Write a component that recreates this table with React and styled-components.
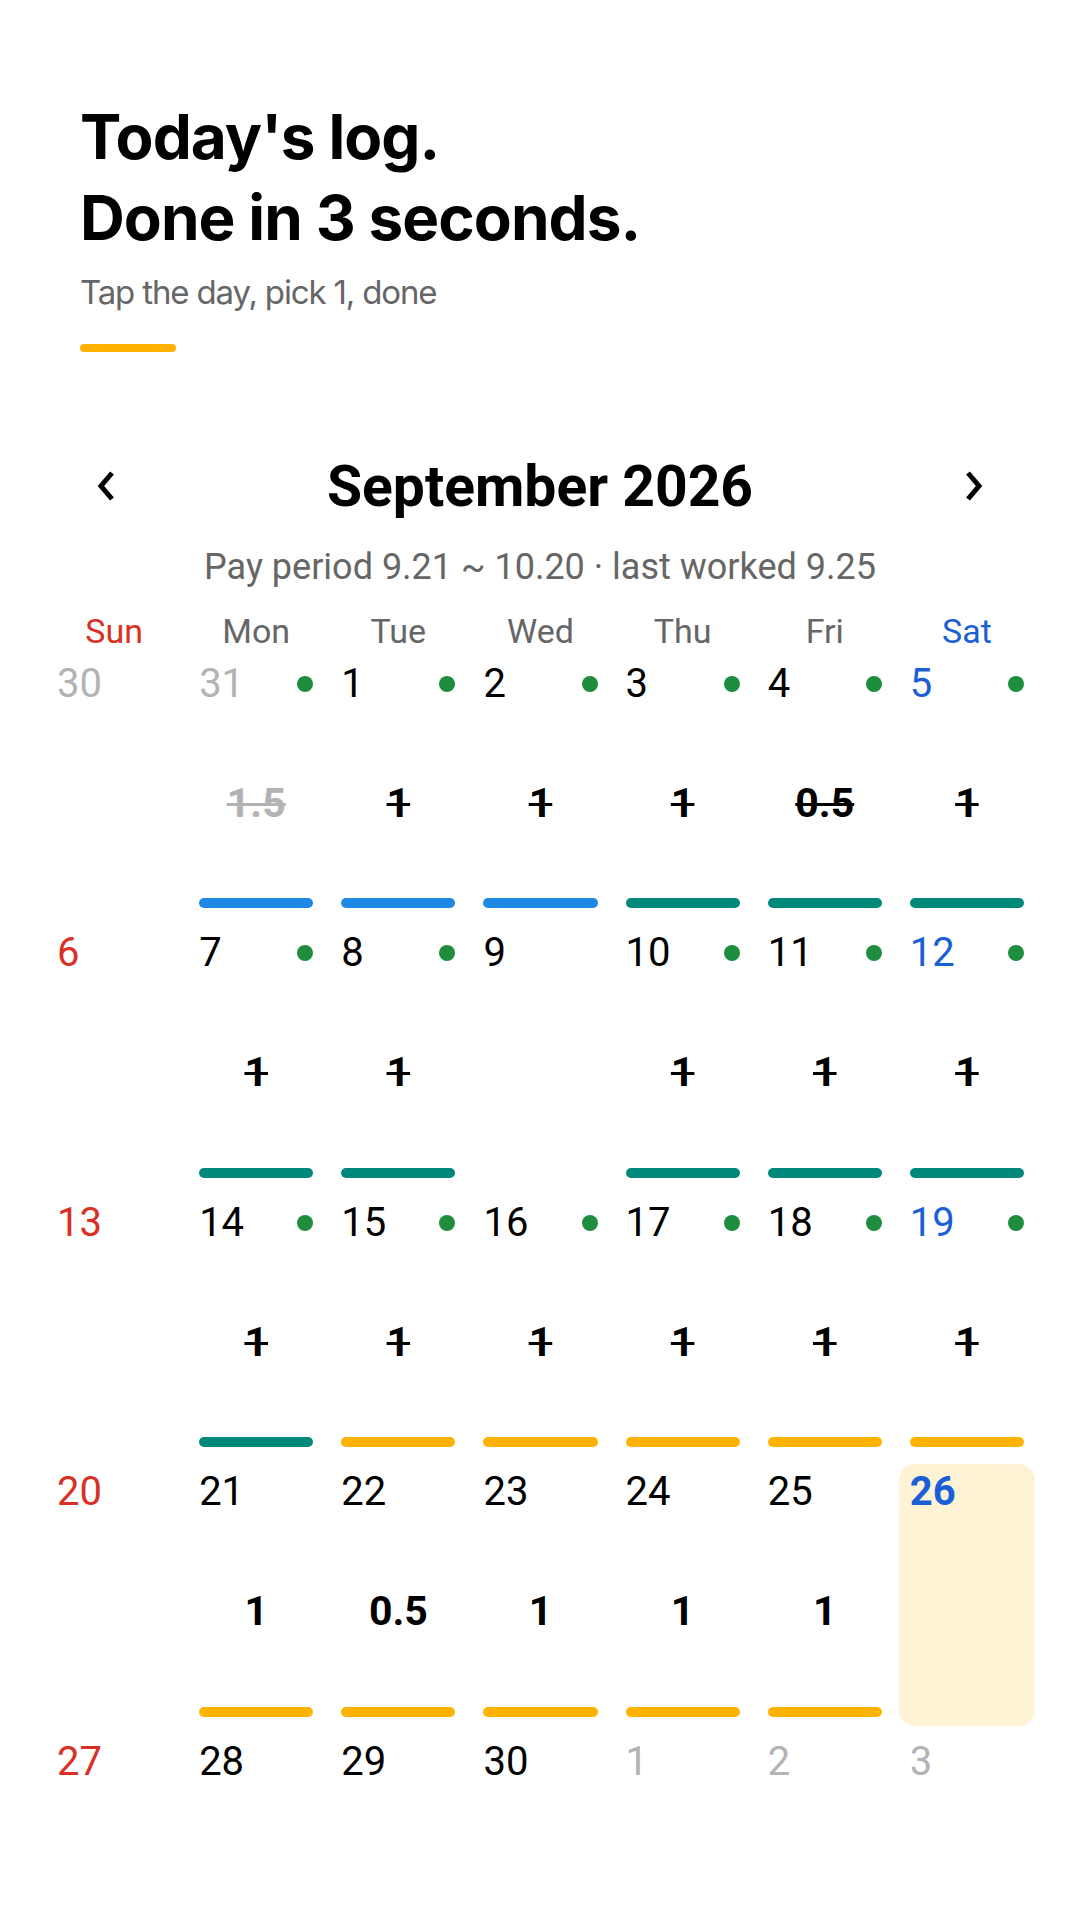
import React from 'react'
import styled, { createGlobalStyle } from 'styled-components'

const GlobalStyle = createGlobalStyle`
    body {
        margin: 0;
        background: #fff;
        font-family: Roboto, "Noto Sans", sans-serif;
        color: #000;
    }
`

const Page = styled.div`
    padding-top: 97px;
`
const Intro = styled.header`
    padding: 0 80px;
`
const Headline = styled.h1`
    margin: 0;
    font-family: Inter, "Noto Sans", sans-serif;
    font-weight: 700;
    font-size: 62px;
    line-height: 1.3;
    letter-spacing: -0.015em;
`
const Sub = styled.p`
    margin: 13px 0 0;
    font-family: Inter, "Noto Sans", sans-serif;
    font-size: 33px;
    line-height: 1.3;
    letter-spacing: -0.035em;
    color: #666;
`
const Accent = styled.div`
    margin-top: 30px;
    width: 96px;
    height: 8px;
    border-radius: 4px;
    background: #ffb300;
`
const Nav = styled.div`
    margin-top: 97px;
    padding: 0 97px;
    display: flex;
    align-items: flex-start;
    justify-content: space-between;
`
const Arrow = styled.button`
    border: 0;
    background: none;
    padding: 0;
    width: 18px;
    height: 30px;
    margin-top: 22px;
    display: flex;
`
const Month = styled.h2`
    margin: 4px 0 0;
    font-size: 57px;
    font-weight: 700;
    line-height: 67px;
`
const Period = styled.div`
    margin-top: 26px;
    text-align: center;
    font-size: 36px;
    line-height: 43px;
    color: #666;
`
const Grid = styled.div`
    padding: 0 45px 0 46px;
    display: grid;
    grid-template-columns: repeat(7, 1fr);
    column-gap: 6px;
    row-gap: 8px;
`
const Weekday = styled.div`
    margin-top: 24.5px;
    text-align: center;
    font-size: 34px;
    line-height: 34px;
    color: ${p => p.$tone === 'sun' ? '#d93025' : p.$tone === 'sat' ? '#1a5fd6' : '#666'};
`
const Cell = styled.div`
    height: 261.5px;
    box-sizing: border-box;
    padding: 8px 11px 9px;
    display: flex;
    flex-direction: column;
    border-radius: 16px;
    background: ${p => p.$today ? '#fff3d6' : 'transparent'};
`
const Top = styled.div`
    display: flex;
    align-items: center;
    justify-content: space-between;
    height: 40px;
`
const DateNum = styled.span`
    font-size: 40px;
    line-height: 40px;
    font-weight: ${p => p.$today ? 700 : 400};
    color: ${p => p.$tone === 'muted' ? '#b3b3b3' : p.$tone === 'sun' ? '#d93025' : p.$tone === 'sat' ? '#1a5fd6' : '#000'};
`
const Dot = styled.span`
    width: 16px;
    height: 16px;
    border-radius: 50%;
    background: #1e8e3e;
`
const Value = styled.div`
    flex: 1;
    padding-top: 5px;
    display: flex;
    align-items: center;
    justify-content: center;
    font-size: 41px;
    line-height: 41px;
    font-weight: 700;
    color: ${p => p.$muted ? '#b3b3b3' : '#000'};
    text-decoration: ${p => p.$done ? 'line-through' : 'none'};
    text-decoration-thickness: 3px;
`
const Bar = styled.div`
    height: 10px;
    border-radius: 5px;
    background: ${p => p.$color};
    visibility: ${p => p.$color ? 'visible' : 'hidden'};
`

const BLUE = '#1e88e5'
const TEAL = '#00897b'
const AMBER = '#ffb300'

const days = [
    { d: 30, tone: 'muted' },
    { d: 31, tone: 'muted', dot: true, v: '1.5', done: true, muted: true, bar: BLUE },
    { d: 1, dot: true, v: '1', done: true, bar: BLUE },
    { d: 2, dot: true, v: '1', done: true, bar: BLUE },
    { d: 3, dot: true, v: '1', done: true, bar: TEAL },
    { d: 4, dot: true, v: '0.5', done: true, bar: TEAL },
    { d: 5, tone: 'sat', dot: true, v: '1', done: true, bar: TEAL },

    { d: 6, tone: 'sun' },
    { d: 7, dot: true, v: '1', done: true, bar: TEAL },
    { d: 8, dot: true, v: '1', done: true, bar: TEAL },
    { d: 9 },
    { d: 10, dot: true, v: '1', done: true, bar: TEAL },
    { d: 11, dot: true, v: '1', done: true, bar: TEAL },
    { d: 12, tone: 'sat', dot: true, v: '1', done: true, bar: TEAL },

    { d: 13, tone: 'sun' },
    { d: 14, dot: true, v: '1', done: true, bar: TEAL },
    { d: 15, dot: true, v: '1', done: true, bar: AMBER },
    { d: 16, dot: true, v: '1', done: true, bar: AMBER },
    { d: 17, dot: true, v: '1', done: true, bar: AMBER },
    { d: 18, dot: true, v: '1', done: true, bar: AMBER },
    { d: 19, tone: 'sat', dot: true, v: '1', done: true, bar: AMBER },

    { d: 20, tone: 'sun' },
    { d: 21, v: '1', bar: AMBER },
    { d: 22, v: '0.5', bar: AMBER },
    { d: 23, v: '1', bar: AMBER },
    { d: 24, v: '1', bar: AMBER },
    { d: 25, v: '1', bar: AMBER },
    { d: 26, tone: 'sat', today: true },

    { d: 27, tone: 'sun' },
    { d: 28 },
    { d: 29 },
    { d: 30 },
    { d: 1, tone: 'muted' },
    { d: 2, tone: 'muted' },
    { d: 3, tone: 'muted' },
]

const weekdays = ['Sun', 'Mon', 'Tue', 'Wed', 'Thu', 'Fri', 'Sat']

const Chevron = ({ dir }) => (
    <svg width="18" height="30" viewBox="0 0 18 30">
        <path
            d={dir === 'left' ? 'M15 2 L4 15 L15 28' : 'M3 2 L14 15 L3 28'}
            fill="none"
            stroke="#000"
            strokeWidth="5"
        />
    </svg>
)

const App = () => {
    return (
        <Page>
            <GlobalStyle />
            <Intro>
                <Headline>Today's log.<br />Done in 3 seconds.</Headline>
                <Sub>Tap the day, pick 1, done</Sub>
                <Accent />
            </Intro>

            <Nav>
                <Arrow aria-label="previous month"><Chevron dir="left" /></Arrow>
                <Month>September 2026</Month>
                <Arrow aria-label="next month"><Chevron dir="right" /></Arrow>
            </Nav>
            <Period>Pay period 9.21 ~ 10.20 · last worked 9.25</Period>

            <Grid>
                {weekdays.map((w, i) => (
                    <Weekday key={w} $tone={i === 0 ? 'sun' : i === 6 ? 'sat' : ''}>{w}</Weekday>
                ))}
                {days.map((day, i) => {
                    const tone = day.tone || (i % 7 === 0 ? 'sun' : '')
                    return (
                        <Cell key={i} $today={day.today}>
                            <Top>
                                <DateNum $tone={tone} $today={day.today}>{day.d}</DateNum>
                                {day.dot && <Dot />}
                            </Top>
                            <Value $muted={day.muted} $done={day.done}>{day.v}</Value>
                            <Bar $color={day.bar} />
                        </Cell>
                    )
                })}
            </Grid>
        </Page>
    )
}
export default App
